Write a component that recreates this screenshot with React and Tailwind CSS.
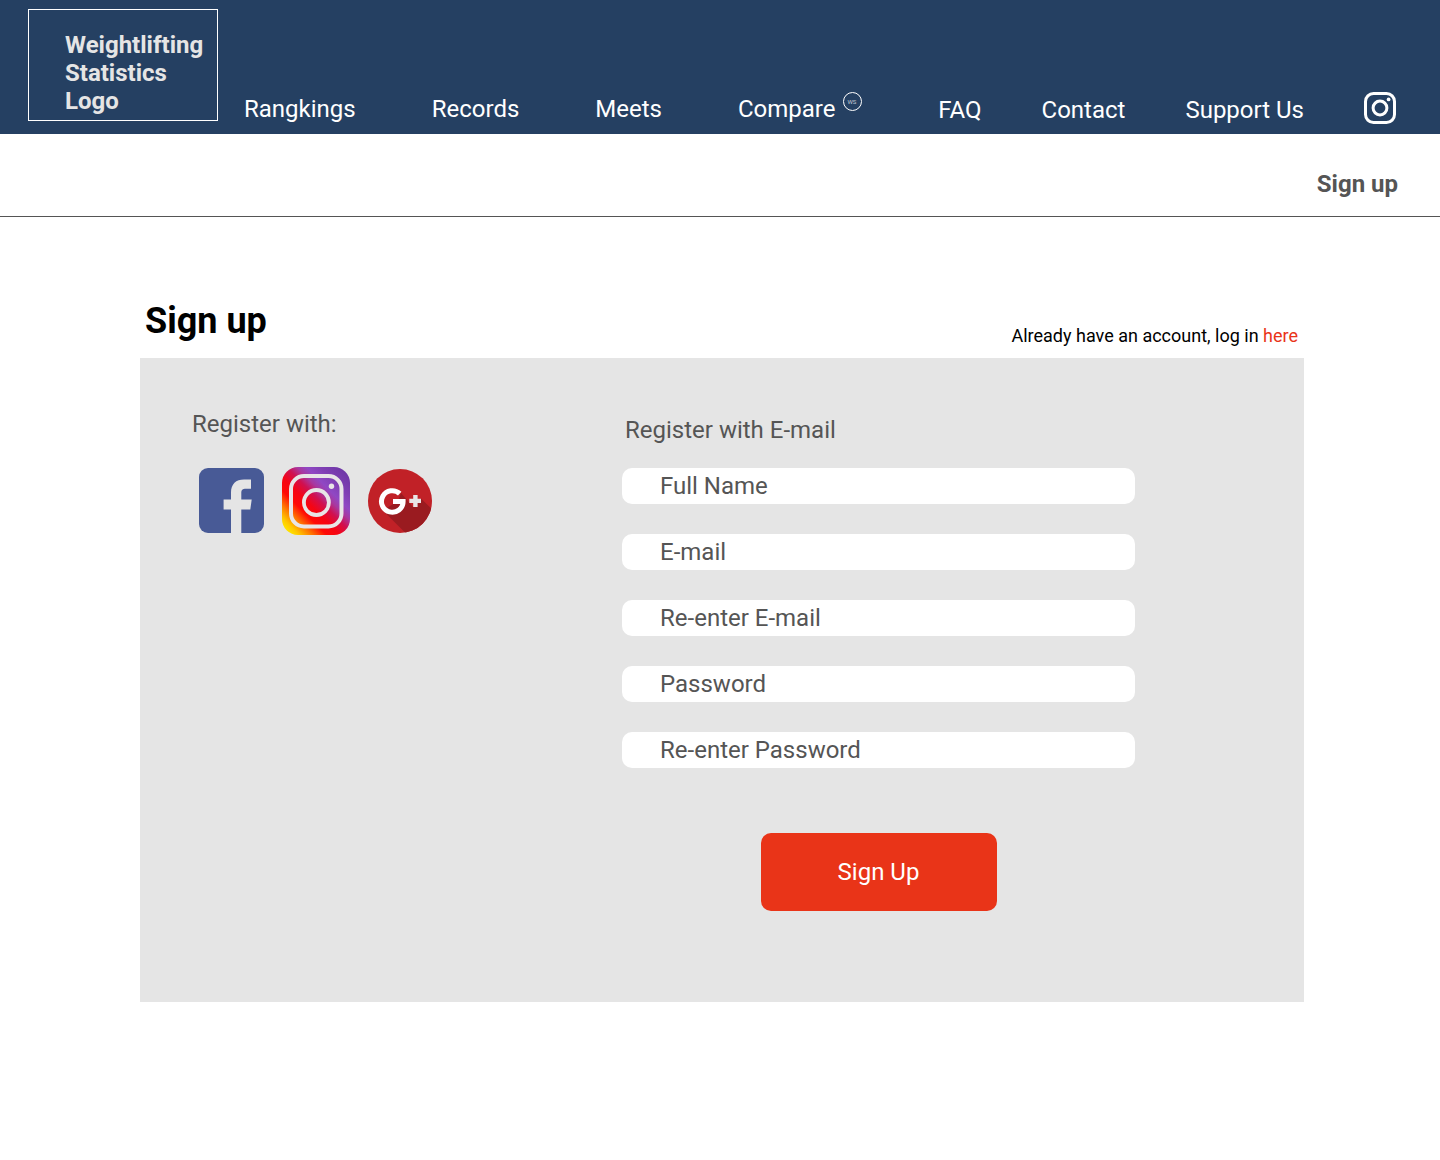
import React from "react";

const primaryLinks = ["Rangkings", "Records", "Meets"];
const secondaryLinks = ["FAQ", "Contact", "Support Us"];
const fields = [
  { id: "name", label: "Full Name", type: "text" },
  { id: "email", label: "E-mail", type: "email" },
  { id: "email2", label: "Re-enter E-mail", type: "email" },
  { id: "password", label: "Password", type: "password" },
  { id: "password2", label: "Re-enter Password", type: "password" },
];

function InstagramOutline() {
  return (
    <svg className="size-8" viewBox="0 0 32 32" fill="none" stroke="white" aria-hidden="true">
      <rect x="1.5" y="1.5" width="29" height="29" rx="8" strokeWidth="3" />
      <circle cx="16" cy="16" r="6.9" strokeWidth="3" />
      <circle cx="24.6" cy="7.4" r="1.9" fill="white" stroke="none" />
    </svg>
  );
}

function FacebookLogo() {
  return (
    <svg className="size-[65px]" viewBox="0 0 65 65" aria-hidden="true">
      <rect width="65" height="65" rx="9" fill="#485a96" />
      <path
        fill="#e5e5e5"
        d="M32 65V41.5H24.6V31.5H32V24.5C32 16 37 11.5 45 11.5H52V20.7H47C43.5 20.7 42.3 22 42.3 25V31.5H52.7L51.3 41.5H42.3V65Z"
      />
    </svg>
  );
}

function InstagramLogo() {
  return (
    <svg className="size-[68px]" viewBox="0 0 68 68" fill="none" aria-hidden="true">
      <defs>
        <linearGradient id="ig" gradientUnits="userSpaceOnUse" x1="0" y1="68" x2="68" y2="0">
          <stop offset="0.08" stopColor="#ffe000" />
          <stop offset="0.13" stopColor="#ffc800" />
          <stop offset="0.22" stopColor="#ff7a00" />
          <stop offset="0.33" stopColor="#ff0a05" />
          <stop offset="0.43" stopColor="#f50514" />
          <stop offset="0.53" stopColor="#d01050" />
          <stop offset="0.61" stopColor="#a838a0" />
          <stop offset="0.68" stopColor="#9048c4" />
          <stop offset="0.78" stopColor="#8040b4" />
          <stop offset="0.95" stopColor="#6c35a5" />
        </linearGradient>
      </defs>
      <rect width="68" height="68" rx="16" fill="url(#ig)" />
      <rect x="9" y="9" width="50.5" height="50.5" rx="13" stroke="#e8e5e6" strokeWidth="4" />
      <circle cx="34.4" cy="35.5" r="12.5" stroke="#e8e5e6" strokeWidth="3.8" />
      <circle cx="49.5" cy="19.3" r="2.7" fill="#e8e5e6" />
    </svg>
  );
}

function GooglePlusLogo() {
  return (
    <svg className="size-16" viewBox="0 0 64 64" aria-hidden="true">
      <defs>
        <clipPath id="disc">
          <circle cx="32" cy="32" r="32" />
        </clipPath>
      </defs>
      <circle cx="32" cy="32" r="32" fill="#c12127" />
      <g clipPath="url(#disc)" fill="#9a1b20">
        <path d="M15 41.5L42 68.5H70V46L53 29.5L45 38L33 24L30 32Z" />
      </g>
      <path
        fill="none"
        stroke="white"
        strokeWidth="5"
        d="M31.7 24.6A10.8 10.8 0 1 0 35.1 32.4H25"
      />
      <path fill="#e8e5e6" d="M45.2 26h4.4v3.800H53v4.200h-3.400v4h-4.400v-4h-3.900v-4.200h3.900z" />
    </svg>
  );
}

export default function App() {
  return (
    <div className="min-h-screen bg-white font-['Roboto',sans-serif] text-2xl/7 text-[#555555]">
      <header className="flex items-end bg-[#254062] pt-[9px] pr-11 pb-[10px] pl-7 text-white">
        <a
          href="#"
          className="mb-[3px] w-[190px] shrink-0 border border-white pt-[21px] pb-[5px] pl-9 font-bold text-[#e5e5e5]"
        >
          Weightlifting
          <br />
          Statistics
          <br />
          Logo
        </a>
        <nav className="flex flex-1 items-end justify-between pl-[26px]">
          <div className="flex gap-[76px] pb-px">
            {primaryLinks.map((l) => (
              <a key={l} href="#">{l}</a>
            ))}
            <a href="#" className="flex gap-[7px]">
              Compare
              <span className="-mt-[3px] flex size-[19px] items-center justify-center rounded-full border border-white text-[6px]/[8px] text-[#c3cad4]">
                WS
              </span>
            </a>
          </div>
          <div className="flex items-end gap-[60px]">
            {secondaryLinks.map((l) => (
              <a key={l} href="#">{l}</a>
            ))}
            <a href="#" aria-label="Instagram">
              <InstagramOutline />
            </a>
          </div>
        </nav>
      </header>

      <div className="flex justify-end border-b border-[#555555] pt-9 pr-[42px] pb-[18px]">
        <a href="#" className="font-bold">Sign up</a>
      </div>

      <main className="pt-[83px] pr-[136px] pl-[140px]">
        <div className="flex items-end justify-between pr-[6px] pb-3 pl-[5px]">
          <h1 className="pb-1 text-4xl/[42px] font-bold text-black">Sign up</h1>
          <p className="text-lg/5 text-black">
            Already have an account, log in{" "}
            <a href="#" className="text-[#e93418]">here</a>
          </p>
        </div>

        <div className="flex bg-[#e5e5e5] px-[52px] pt-[52px] pb-[91px]">
          <section className="w-[430px] shrink-0">
            <h2>Register with:</h2>
            <div className="flex items-center gap-[18px] pt-[29px] pl-[7px]">
              <a href="#" aria-label="Facebook" className="pb-px"><FacebookLogo /></a>
              <a href="#" aria-label="Instagram"><InstagramLogo /></a>
              <a href="#" aria-label="Google Plus"><GooglePlusLogo /></a>
            </div>
          </section>

          <form className="max-w-[513px] flex-1 pt-[6px]" onSubmit={(e) => e.preventDefault()}>
            <h2 className="pb-6 pl-[3px]">Register with E-mail</h2>
            <div className="flex flex-col gap-[30px]">
              {fields.map((f) => (
                <input
                  key={f.id}
                  id={f.id}
                  type={f.type}
                  aria-label={f.label}
                  placeholder={f.label}
                  className="h-9 w-full rounded-[10px] bg-white px-[38px] text-2xl/7 placeholder:text-[#555555]"
                />
              ))}
            </div>
            <button
              type="submit"
              className="mx-auto mt-[65px] block h-[78px] w-[236px] rounded-[10px] bg-[#e93418] text-white"
            >
              Sign Up
            </button>
          </form>
        </div>
      </main>
    </div>
  );
}
